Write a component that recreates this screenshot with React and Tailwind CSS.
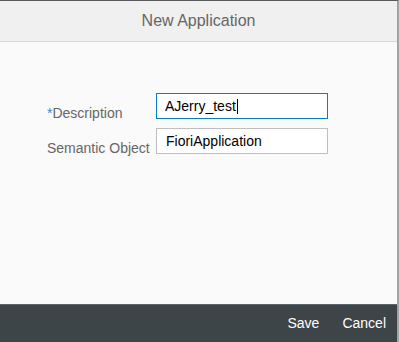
export default function App() {
  return (
    <div className="flex h-[342px] w-[399px] flex-col border-t border-r-2 border-t-[#5a5a5a] border-r-[#a3a3a3] font-['Liberation_Sans',Arial,sans-serif]">
      <div className="flex h-[41px] items-center justify-center border-b border-[#d6d6d6] bg-[#f0f0f0] text-[16px] text-[#666666]">
        New Application
      </div>

      <div className="flex-1 bg-[#fafafa] pt-[51px] pl-[47px]">
        <div className="grid grid-cols-[109px_172px] gap-y-[9px]">
          <label className="translate-y-[2px] self-end text-[14px] leading-[16px] text-[#666666]">
            <span className="text-[#3a8cd0]">*</span>Description
          </label>
          <div className="flex h-[26px] items-center border border-[#0a7cc1] bg-white px-[8px] text-[14px] text-black">
            AJerry_test
            <span className="ml-px inline-block h-[15px] w-px bg-black" />
          </div>

          <label className="translate-y-[2px] self-end text-[14px] leading-[16px] text-[#666666]">
            Semantic Object
          </label>
          <div className="flex h-[26px] items-center border border-[#bfbfbf] bg-white px-[9px] text-[14px] text-black">
            FioriApplication
          </div>
        </div>
      </div>

      <div className="flex h-[38px] items-center justify-end gap-[23px] border-t border-[#5c676c] bg-[#3e4548] pr-[11px] text-[14px] text-white">
        <button>Save</button>
        <button>Cancel</button>
      </div>
    </div>
  );
}
